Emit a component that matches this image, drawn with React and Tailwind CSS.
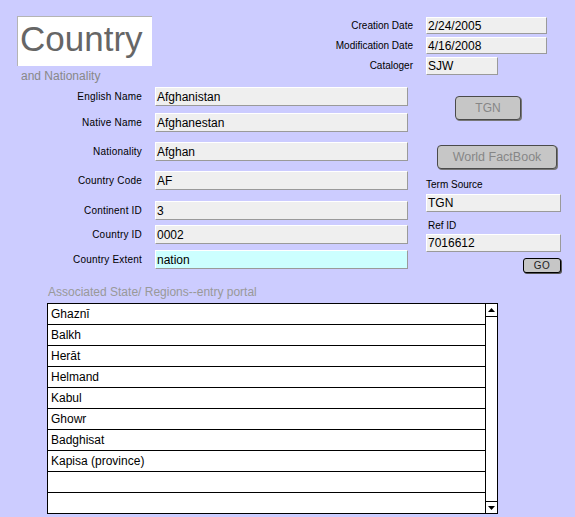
import React from "react";

const fieldBase =
  "flex items-center pl-[1px] text-[12px] leading-none text-black border border-t-white border-l-white border-b-[#9a9a9a] border-r-[#9a9a9a]";

function Label({ children, className }) {
  return <div className={"text-[10px] leading-[12px] text-black " + className}>{children}</div>;
}

function FormRow({ label, value, mt, cyan }) {
  return (
    <div className={"flex items-center h-[19px] " + mt}>
      <div className="w-[142px] text-right text-[10px] leading-[12px] tracking-[0.2px] text-black">{label}</div>
      <div
        className={
          fieldBase +
          " ml-[13px] w-[253px] h-[19px] " +
          (cyan ? "bg-[#ccffff]" : "bg-[#efefef]")
        }
      >
        {value}
      </div>
    </div>
  );
}

const regions = [
  "Ghaznī",
  "Balkh",
  "Herāt",
  "Helmand",
  "Kabul",
  "Ghowr",
  "Badghisat",
  "Kapisa (province)",
  "",
  "",
];

export default function App() {
  return (
    <div className="w-[575px] h-[517px] bg-[#ccccff] overflow-hidden font-['Liberation_Sans',Arial,sans-serif] flex flex-col">
      {/* Header */}
      <div className="h-[87px] flex items-start">
        <div className="ml-[17px] pt-[16px]">
          <div className="w-[135px] h-[50px] bg-white border-t border-l border-[#b4b4b4] pt-[4px] pl-[2px] text-[35px] leading-[35px] text-[#666666]">
            Country
          </div>
          <div className="mt-[3px] pl-[4px] text-[12px] leading-[14px] text-[#888888]">and Nationality</div>
        </div>
        <div className="ml-auto mr-[28px] mt-[17px] grid grid-cols-[auto_121px] content-start gap-x-[13px] gap-y-[3px] items-center">
          <Label className="text-right">Creation Date</Label>
          <div className={fieldBase + " h-[17px] w-[121px] bg-[#efefef]"}>2/24/2005</div>
          <Label className="text-right">Modification Date</Label>
          <div className={fieldBase + " h-[17px] w-[121px] bg-[#efefef]"}>4/16/2008</div>
          <Label className="text-right">Cataloger</Label>
          <div className={fieldBase + " h-[18px] w-[72px] bg-[#efefef]"}>SJW</div>
        </div>
      </div>

      {/* Main */}
      <div className="h-[198px] flex">
        <div className="w-[408px] flex flex-col">
          <FormRow label="English Name" value="Afghanistan" mt="mt-0" />
          <FormRow label="Native Name" value="Afghanestan" mt="mt-[7px]" />
          <FormRow label="Nationality" value="Afghan" mt="mt-[10px]" />
          <FormRow label="Country Code" value="AF" mt="mt-[10px]" />
          <FormRow label="Continent ID" value="3" mt="mt-[11px]" />
          <FormRow label="Country ID" value="0002" mt="mt-[5px]" />
          <FormRow label="Country Extent" value="nation" mt="mt-[6px]" cyan />
        </div>
        <div className="flex-1 flex flex-col">
          <div className="ml-[47px] mt-[9px] w-[66px] h-[24px] rounded-[4px] bg-[#c6c6c6] border border-[#4a4a4a] shadow-[1px_1px_0_#777] flex items-center justify-center text-[12px] text-[#868686]">
            TGN
          </div>
          <div className="ml-[29px] mt-[25px] w-[120px] h-[24px] rounded-[4px] bg-[#c6c6c6] border border-[#4a4a4a] shadow-[1px_1px_0_#777] flex items-center justify-center text-[12.5px] text-[#868686]">
            World FactBook
          </div>
          <Label className="ml-[18px] mt-[10px]">Term Source</Label>
          <div className={fieldBase + " ml-[18px] mt-[3px] w-[135px] h-[18px] bg-[#efefef]"}>TGN</div>
          <Label className="ml-[20px] mt-[8px]">Ref ID</Label>
          <div className={fieldBase + " ml-[18px] mt-[2px] w-[135px] h-[18px] bg-[#efefef]"}>7016612</div>
          <div className="ml-[115px] mt-[6px] w-[38px] h-[15px] rounded-[3px] bg-[#c6c6c6] border border-black shadow-[1px_1px_0_#555] flex items-center justify-center text-[10px] tracking-[0.5px] text-[#222]">
            GO
          </div>
        </div>
      </div>

      {/* List */}
      <div className="ml-[48px] h-[14px] text-[12px] leading-[14px] text-[#999999]">
        Associated State/ Regions--entry portal
      </div>
      <div className="ml-[47px] mt-[4px] w-[451px] h-[211px] bg-white border border-black flex">
        <div className="w-[437px] flex flex-col">
          {regions.map((r, i) => (
            <div
              key={i}
              className={
                "flex items-center pl-[3px] text-[12px] leading-none text-black " +
                (i < regions.length - 1 ? "h-[21px] border-b border-black" : "h-[20px]")
              }
            >
              {r}
            </div>
          ))}
        </div>
        <div className="flex-1 border-l border-black flex flex-col justify-between">
          <div className="h-[13px] border-b border-black flex items-center justify-center">
            <svg width="7" height="4" viewBox="0 0 7 4">
              <polygon points="3.5,0 7,4 0,4" fill="black" />
            </svg>
          </div>
          <div className="h-[12px] border-t border-black flex items-center justify-center">
            <svg width="7" height="4" viewBox="0 0 7 4">
              <polygon points="0,0 7,0 3.5,4" fill="black" />
            </svg>
          </div>
        </div>
      </div>
    </div>
  );
}
